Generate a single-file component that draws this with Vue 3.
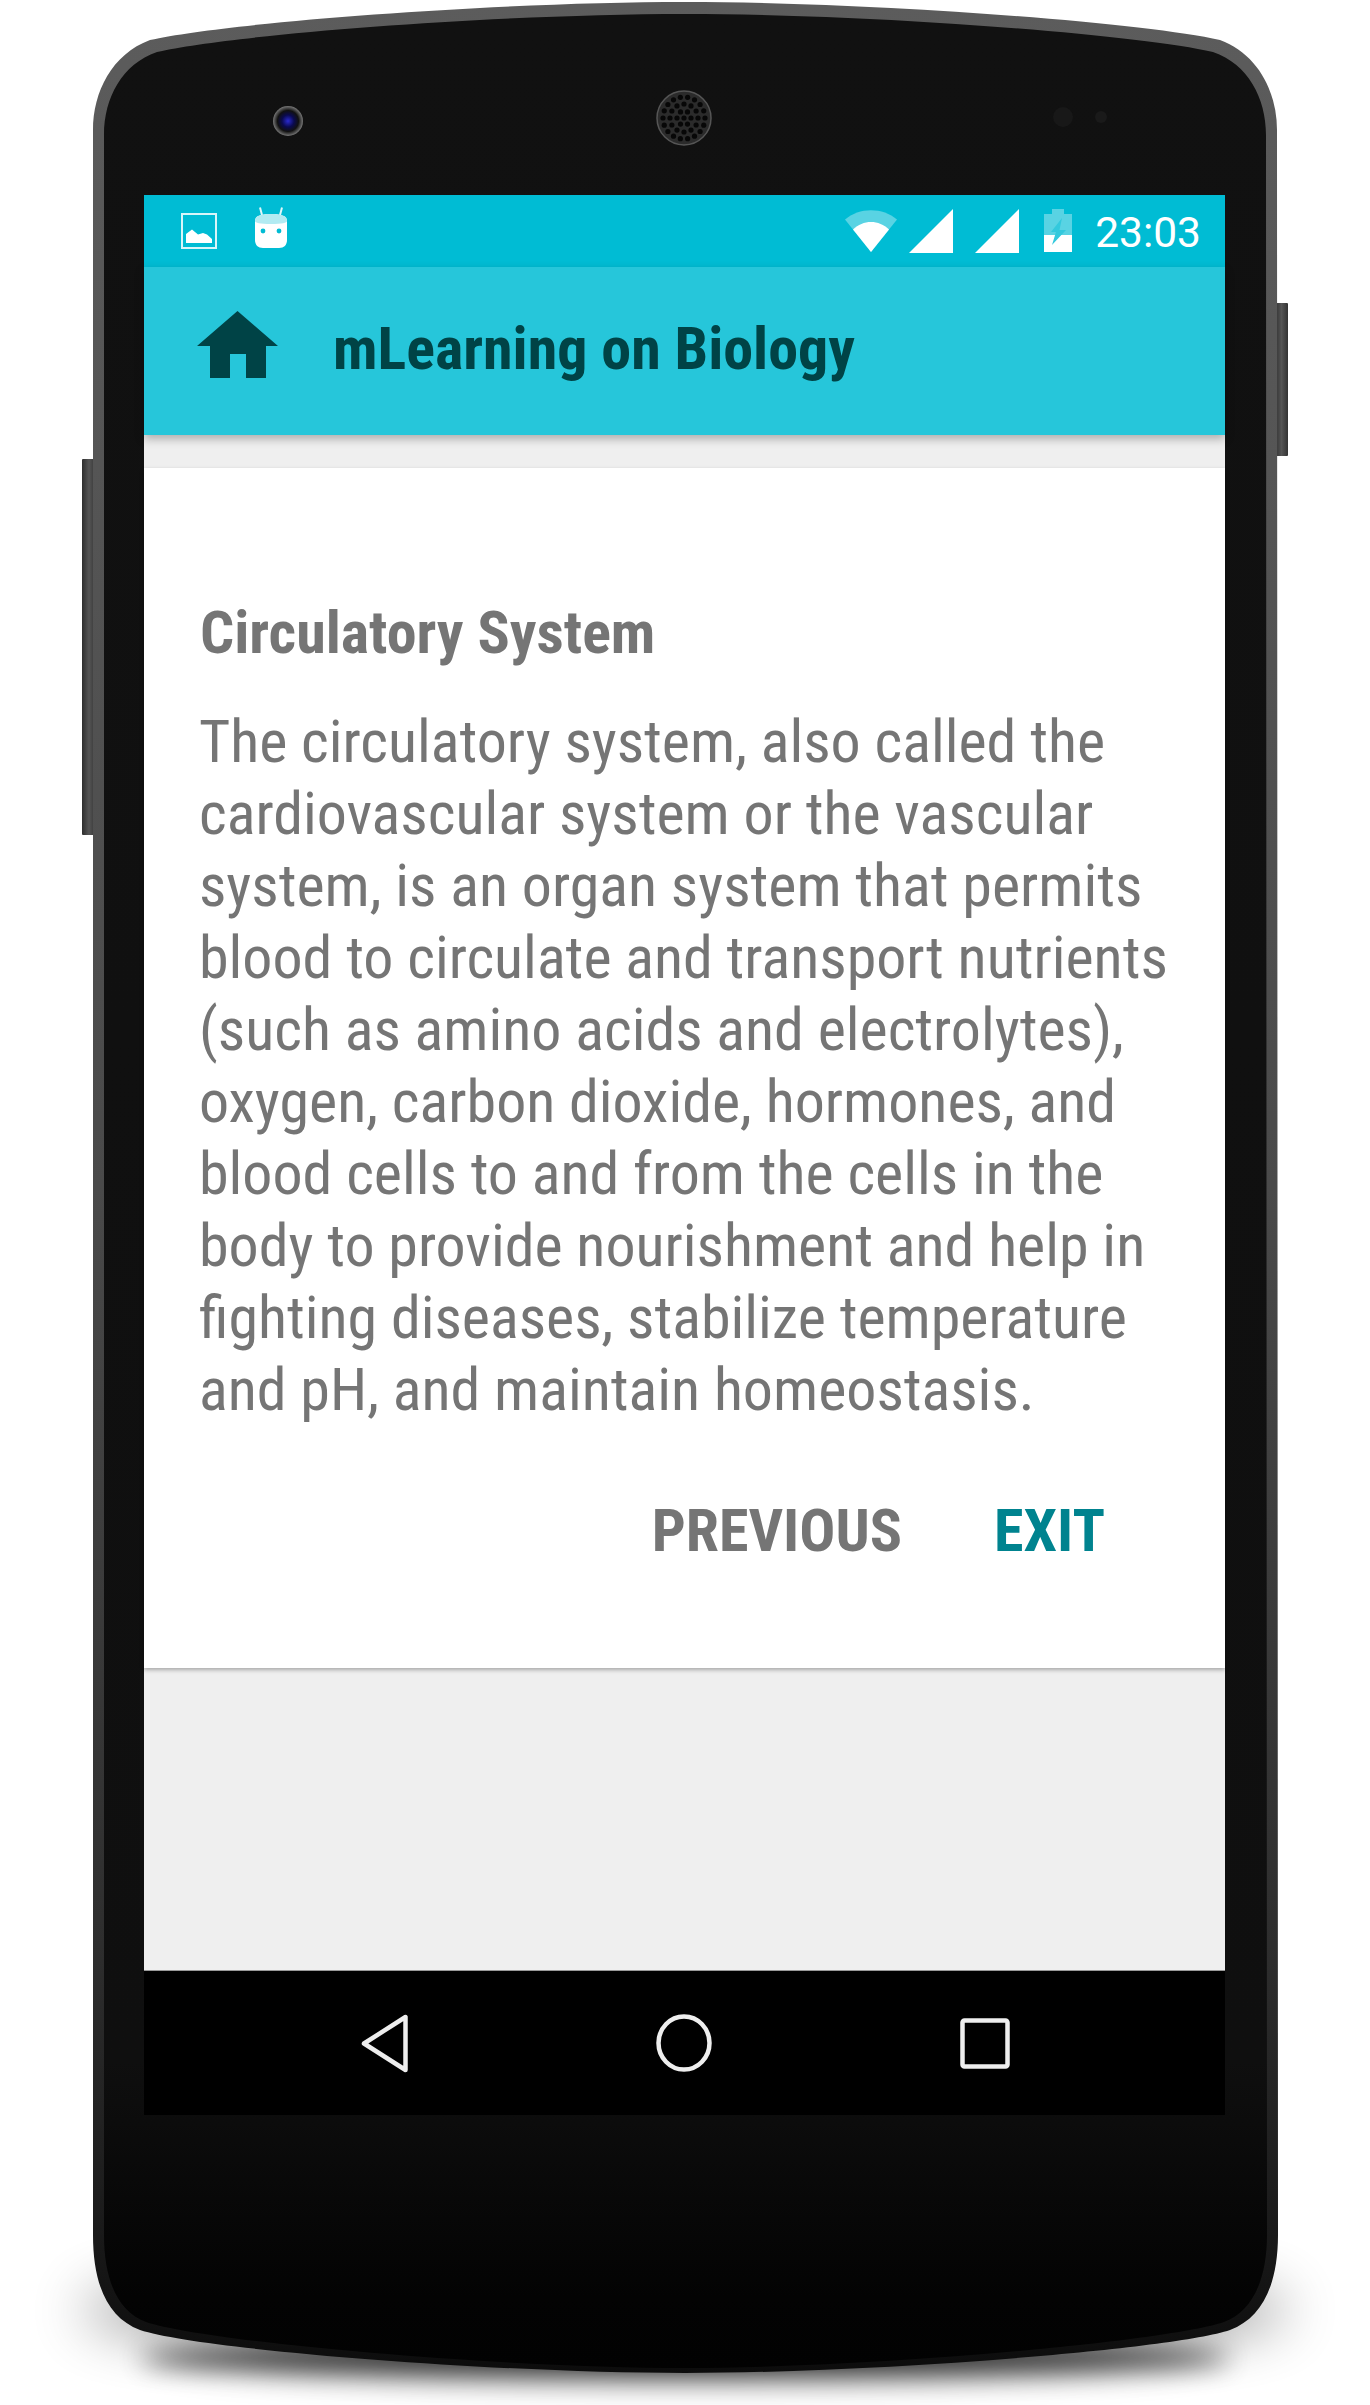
<template>
  <div class="page">
    <svg class="body" width="1370" height="2405" viewBox="0 0 1370 2405">
      <defs>
        <linearGradient id="rim" x1="0" y1="0" x2="0" y2="1">
          <stop offset="0" stop-color="#5c5c5c" />
          <stop offset="0.5" stop-color="#4a4a4a" />
          <stop offset="0.82" stop-color="#2e2e2e" />
          <stop offset="0.93" stop-color="#1c1c1c" />
          <stop offset="1" stop-color="#0c0c0c" />
        </linearGradient>
        <linearGradient id="face" x1="0" y1="0" x2="0" y2="1">
          <stop offset="0" stop-color="#111" />
          <stop offset="0.87" stop-color="#0f0f0f" />
          <stop offset="0.97" stop-color="#030303" />
          <stop offset="1" stop-color="#020202" />
        </linearGradient>
        <linearGradient id="side" x1="0" y1="0" x2="1" y2="0">
          <stop offset="0" stop-color="#2e2e2e" />
          <stop offset="0.5" stop-color="#555" />
          <stop offset="1" stop-color="#333" />
        </linearGradient>
        <radialGradient id="lens">
          <stop offset="0" stop-color="#2a2ad0" />
          <stop offset="0.4" stop-color="#0a0a50" />
          <stop offset="0.7" stop-color="#111" />
          <stop offset="1" stop-color="#777" />
        </radialGradient>
        <filter id="blur-wide" x="-20%" y="-100%" width="140%" height="300%">
          <feGaussianBlur stdDeviation="28" />
        </filter>
        <filter id="blur-tight" x="-20%" y="-200%" width="140%" height="500%">
          <feGaussianBlur stdDeviation="13" />
        </filter>
      </defs>

      <ellipse cx="685" cy="2310" rx="605" ry="50" fill="#000" opacity="0.4" filter="url(#blur-wide)" />
      <ellipse cx="685" cy="2358" rx="545" ry="20" fill="#000" opacity="0.75" filter="url(#blur-tight)" />

      <rect x="82" y="459" width="14" height="376" rx="1" fill="url(#side)" />
      <rect x="1275" y="303" width="13" height="153" rx="1" fill="url(#side)" />

      <path
        d="M93 130C93 92 112 54 150 40C230 22 500 2 685 2C870 2 1140 22 1220 40C1258 54 1277 92 1277 130L1278 2235C1278 2285 1262 2318 1230 2330C1170 2350 870 2373 685 2373C500 2373 200 2350 140 2330C108 2318 93 2285 93 2235Z"
        fill="url(#rim)"
      />
      <path
        d="M104 135C104 98 122 64 157 52C235 34 500 14 685 14C870 14 1135 34 1213 52C1248 64 1266 98 1266 135L1267 2235C1267 2280 1252 2312 1224 2322C1165 2342 870 2368 685 2368C500 2368 205 2342 146 2322C118 2312 104 2280 104 2235Z"
        fill="url(#face)"
      />

      <circle cx="288" cy="121" r="15" fill="url(#lens)" />
      <circle cx="684" cy="118" r="27" fill="#2b2b2b" stroke="#555" stroke-width="1.500" />
      <circle
        v-for="(dot, i) in speakerDots"
        :key="i"
        :cx="dot.x"
        :cy="dot.y"
        r="2.600"
        fill="#070707"
      />
      <circle cx="1063" cy="117" r="10" fill="#181818" />
      <circle cx="1101" cy="117" r="6" fill="#1a1a1a" />
    </svg>

    <div class="screen">
      <div class="status-bar">
        <div class="status-left">
          <svg class="ic-image" width="36" height="36" viewBox="0 0 36 36">
            <rect x="1" y="1" width="34" height="34" fill="none" stroke="#fff" stroke-width="2" stroke-opacity="0.85" />
            <path d="M5 30V21L11 16.500L17 21.500L22 20L26 21.500L31 26V30Z" fill="#fff" />
          </svg>
          <svg class="ic-android" width="34" height="41" viewBox="0 0 34 41">
            <path d="M8 8L6 0.500M26 8L28 0.500" stroke="#e0f7fa" stroke-width="2" fill="none" />
            <path d="M1 14C1 9 6 7 17 7C28 7 33 9 33 14V33C33 38 30 41 25 41H9C4 41 1 38 1 33Z" fill="#fff" />
            <path d="M1 14C1 9 6 7 17 7C28 7 33 9 33 14C33 16 28 17 17 17C6 17 1 16 1 14Z" fill="#b2ebf2" />
            <circle cx="9" cy="24" r="2.400" fill="#00bcd4" />
            <circle cx="25" cy="24" r="2.400" fill="#00bcd4" />
          </svg>
        </div>
        <div class="status-right">
          <svg class="ic-wifi" width="52" height="42" viewBox="0 0 52 42">
            <path d="M0 9.500C14 -3 38 -3 52 9.500L26 42Z" fill="#fff" fill-opacity="0.35" />
            <path d="M8 19.500C18 9.500 34 9.500 44 19.500L26 42Z" fill="#fff" />
          </svg>
          <svg class="ic-signal" width="44" height="44" viewBox="0 0 44 44">
            <path d="M44 0V44H0Z" fill="#fff" />
          </svg>
          <svg class="ic-signal" width="44" height="44" viewBox="0 0 44 44">
            <path d="M44 0V44H0Z" fill="#fff" />
          </svg>
          <svg class="ic-battery" width="28" height="43" viewBox="0 0 28 43">
            <path d="M8 0H20V5H28V43H0V5H8Z" fill="#fff" fill-opacity="0.35" />
            <rect y="26" width="28" height="17" fill="#fff" />
            <path d="M18 9L7 23H12L8 36L22 21H15.500Z" fill="#33c9dd" />
          </svg>
          <span class="clock">23:03</span>
        </div>
      </div>

      <div class="app-bar">
        <svg class="ic-home" width="81" height="67" viewBox="0 0 81 67">
          <path d="M40.500 0L81 35H69V67H49V43H33V67H13V35H0Z" fill="#004346" />
        </svg>
        <h1 class="app-title">mLearning on Biology</h1>
      </div>

      <div class="content">
        <div class="card">
          <h2 class="card-title">Circulatory System</h2>
          <p class="card-text">
            The circulatory system, also called the<br />
            cardiovascular system or the vascular<br />
            system, is an organ system that permits<br />
            blood to circulate and transport nutrients<br />
            (such as amino acids and electrolytes),<br />
            oxygen, carbon dioxide, hormones, and<br />
            blood cells to and from the cells in the<br />
            body to provide nourishment and help in<br />
            fighting diseases, stabilize temperature<br />
            and pH, and maintain homeostasis.
          </p>
          <div class="actions">
            <button class="btn">PREVIOUS</button>
            <button class="btn accent">EXIT</button>
          </div>
        </div>
      </div>

      <div class="nav-bar">
        <svg width="47" height="59" viewBox="0 0 47 59">
          <path d="M44.500 3V56L3 29.500Z" fill="none" stroke="#eee" stroke-width="4.500" stroke-linejoin="round" />
        </svg>
        <svg width="56" height="58" viewBox="0 0 56 58">
          <ellipse cx="28" cy="29" rx="25.500" ry="26.500" fill="none" stroke="#eee" stroke-width="4.500" />
        </svg>
        <svg width="50" height="51" viewBox="0 0 50 51">
          <rect x="2.500" y="2.500" width="45" height="46" rx="2" fill="none" stroke="#eee" stroke-width="4.500" />
        </svg>
      </div>
    </div>
  </div>
</template>

<script setup>
// speaker grille: rings of holes around the centre
const speakerDots = [{ x: 684, y: 118 }]
for (const [radius, count] of [[7, 6], [14, 12], [21, 18]]) {
  for (let i = 0; i < count; i++) {
    const a = (i / count) * Math.PI * 2
    speakerDots.push({ x: 684 + radius * Math.cos(a), y: 118 + radius * Math.sin(a) })
  }
}
</script>

<style>
html,
body {
  background: #fff;
}
</style>

<style scoped>
.page {
  position: relative;
  width: 1370px;
  height: 2405px;
  overflow: hidden;
  font-family: Roboto, "Liberation Sans", sans-serif;
}

.body {
  position: absolute;
  top: 0;
  left: 0;
}

.screen {
  position: absolute;
  top: 195px;
  left: 144px;
  width: 1081px;
  height: 1920px;
  display: flex;
  flex-direction: column;
}

.status-bar {
  height: 72px;
  background: #00bcd4;
  display: flex;
  justify-content: space-between;
  align-items: flex-start;
  flex-shrink: 0;
}

.status-left {
  display: flex;
  align-items: flex-start;
  gap: 37px;
  padding: 12px 0 0 37px;
}

.ic-image {
  margin-top: 6px;
}

.status-right {
  display: flex;
  align-items: flex-start;
  padding: 14px 24px 0 0;
}

.ic-wifi {
  margin-right: 12px;
  margin-top: 1px;
}

.ic-signal {
  margin-right: 22px;
}

.ic-signal + .ic-signal {
  margin-right: 25px;
}

.clock {
  margin: 1px 0 0 23px;
  color: #fff;
  font-size: 42.5px;
  line-height: 46px;
}

.app-bar {
  height: 168px;
  background: #26c6da;
  display: flex;
  align-items: center;
  flex-shrink: 0;
  padding-left: 53px;
  box-shadow: 0 4px 9px rgba(0, 0, 0, 0.28);
  position: relative;
  z-index: 1;
}

.ic-home {
  margin-top: -13px;
}

.app-title {
  margin: -6px 0 0 55px;
  color: #004346;
  font-size: 60px;
  font-weight: 700;
  font-stretch: 75%;
  white-space: nowrap;
}

.content {
  flex: 1;
  background: #efefef;
  padding-top: 33px;
  border-bottom: 1px solid #999;
}

.card {
  height: 1200px;
  box-sizing: border-box;
  background: #fff;
  padding: 128px 55px 0;
  box-shadow: 0 2px 4px rgba(0, 0, 0, 0.3);
  position: relative;
}

.card-title {
  margin: 0 0 0 1px;
  color: #757575;
  font-size: 60px;
  line-height: 74px;
  font-weight: 700;
  font-stretch: 75%;
}

.card-text {
  margin: 36px 0 0;
  color: #757575;
  font-size: 60px;
  line-height: 72px;
  font-stretch: 75%;
  white-space: nowrap;
}

.actions {
  display: flex;
  justify-content: flex-end;
  gap: 92px;
  padding-right: 65px;
  margin-top: 69px;
}

.btn {
  padding: 0;
  border: none;
  background: none;
  color: #757575;
  font-family: inherit;
  font-size: 60px;
  line-height: 72px;
  font-weight: 700;
  font-stretch: 75%;
}

.btn.accent {
  color: #00838f;
}

.nav-bar {
  height: 144px;
  background: #000;
  flex-shrink: 0;
  display: flex;
  align-items: center;
  padding-left: 217px;
  gap: 248px;
}
</style>
